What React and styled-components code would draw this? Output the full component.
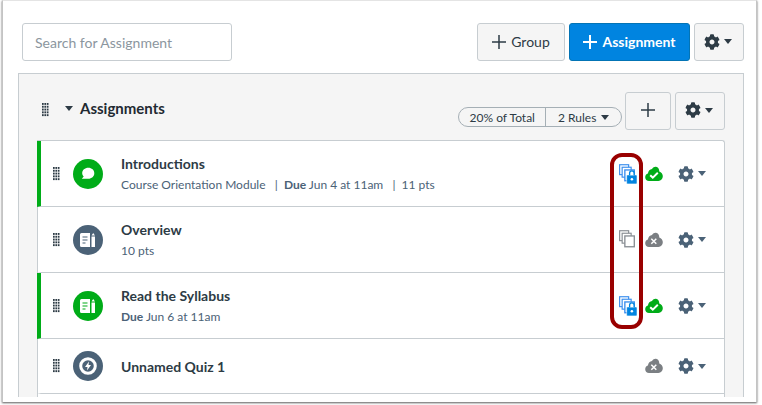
import styled, { createGlobalStyle } from "styled-components";
import { FaCog } from "react-icons/fa";

const GlobalStyle = createGlobalStyle`
  html, body { margin: 0; padding: 0; background: #ffffff; }
  body { font-family: "Lato", "Liberation Sans", sans-serif; color: #2d3b45; overflow: hidden; }
`;

const Screen = styled.div`
  position: relative;
  width: 762px;
  height: 405px;
  overflow: hidden;
  background: #fff;
`;

const Frame = styled.div`
  width: 755px;
  height: 402px;
  margin-left: 2px;
  box-sizing: border-box;
  background: #fff;
  border-top: 1px solid #e4e4e4;
  border-left: 1px solid #c4c4c4;
  border-right: 1px solid #c4c4c4;
  box-shadow: 0 1px 2px rgba(0, 0, 0, 0.65);
  padding: 22px 12px 0 15px;
  overflow: hidden;
`;

const Toolbar = styled.div`
  display: flex;
  align-items: flex-start;
  padding: 0 0 0 4px;
  height: 50px;
`;

const SearchBox = styled.div`
  width: 210px;
  height: 38px;
  box-sizing: border-box;
  border: 1px solid #c7cdd1;
  border-radius: 3px;
  padding: 0 12px;
  display: flex;
  align-items: center;
  font-size: 14px;
  color: #8b969e;
`;

const Actions = styled.div`
  margin-left: auto;
  display: flex;
  gap: 4px;
`;

const Button = styled.div`
  height: 38px;
  width: ${p => p.$w}px;
  flex: none;
  box-sizing: border-box;
  display: flex;
  align-items: center;
  justify-content: center;
  gap: ${p => p.$gap || 5}px;
  border-radius: 3px;
  border: 1px solid ${p => (p.$primary ? "#0374b5" : "#c7cdd1")};
  background: ${p => (p.$primary ? "#0084e0" : "#f5f5f5")};
  color: ${p => (p.$primary ? "#fff" : "#2d3b45")};
  font-size: 14px;
  font-weight: ${p => (p.$primary ? 700 : 400)};
  padding: 0 ${p => p.$pr || 0}px 1px 0;
`;

const Panel = styled.div`
  height: 324px;
  box-sizing: border-box;
  background: #f5f5f5;
  border-top: 1px solid #c7cdd1;
  border-left: 1px solid #c7cdd1;
  border-right: 1px solid #c7cdd1;
  padding: 0 18px;
  overflow: hidden;
`;

const GroupHeader = styled.div`
  height: 65px;
  box-sizing: border-box;
  display: flex;
  align-items: center;
  padding: 8px 0 0 5px;
`;

const GroupHandle = styled.div`
  display: flex;
  position: relative;
  top: -1px;
`;

const CollapseCaret = styled.div`
  margin-left: 16px;
  position: relative;
  top: -2px;
  color: #2d3b45;
`;

const GroupTitle = styled.div`
  font-size: 15px;
  font-weight: 700;
  margin-left: 7px;
  color: #1f2a32;
  position: relative;
  top: -3px;
`;

const HeaderRight = styled.div`
  margin-left: auto;
  display: flex;
  align-items: center;
  gap: 4px;
`;

const Pill = styled.div`
  width: 164px;
  height: 20px;
  box-sizing: border-box;
  display: flex;
  align-items: center;
  border: 1px solid #a5afb5;
  border-radius: 10px;
  font-size: 12px;
  color: #2d3b45;
  margin: 13px -1px 0 0;
`;

const PillPart = styled.div`
  height: 100%;
  display: flex;
  align-items: center;
  justify-content: center;
  gap: 5px;
  width: ${p => p.$w}px;
  border-left: ${p => (p.$divided ? "1px solid #a5afb5" : "none")};
`;

const List = styled.div`
  background: #fff;
  border-top: 1px solid #c7cdd1;
  border-left: 1px solid #c7cdd1;
  border-right: 1px solid #c7cdd1;
  border-top-right-radius: 3px;
  margin-top: 1px;
`;

const Row = styled.div`
  height: ${p => p.$h || 66}px;
  box-sizing: border-box;
  display: flex;
  align-items: center;
  border-bottom: 1px solid #c7cdd1;
  border-left: 4px solid ${p => (p.$published ? "#00ac18" : "transparent")};
  margin-left: -1px;
  padding-left: 12px;
`;

const IconCircle = styled.div`
  width: 30px;
  height: 30px;
  border-radius: 50%;
  flex: none;
  display: flex;
  align-items: center;
  justify-content: center;
  background: ${p => (p.$published ? "#00ac18" : "#4b6277")};
  color: ${p => (p.$published ? "#00ac18" : "#4b6277")};
  margin-left: 13px;
`;

const RowBody = styled.div`
  margin-left: 18px;
  display: flex;
  flex-direction: column;
  gap: 5px;
`;

const Title = styled.div`
  font-size: 14px;
  font-weight: 700;
  line-height: 17px;
  color: #2d3b45;
`;

const Meta = styled.div`
  font-size: 12px;
  line-height: 15px;
  color: #4b6277;
  white-space: pre;

  b { font-weight: 700; }
`;

const RowActions = styled.div`
  margin-left: auto;
  display: flex;
  align-items: center;
  padding-right: 18px;
`;

const CopySlot = styled.div`
  width: 20px;
  height: 20px;
  margin-right: 6px;
`;

const CloudSlot = styled.div`
  width: 18px;
  height: 16px;
  margin-right: 15px;
`;

const GearMenu = styled.div`
  display: flex;
  align-items: center;
  gap: 4px;
  color: #4b6277;
`;

const Caret = styled.span`
  display: block;
  width: 0;
  height: 0;
  border-left: 4px solid transparent;
  border-right: 4px solid transparent;
  border-top: 5px solid currentColor;
`;

const Highlight = styled.div`
  position: absolute;
  left: 610px;
  top: 153px;
  width: 33px;
  height: 176px;
  box-sizing: border-box;
  border: 4px solid #990000;
  border-radius: 12px;
`;

const Handle = () => (
  <svg width="7" height="14" viewBox="0 0 7 14" style={{ flex: "none" }}>
    {[0, 1, 2].flatMap(c =>
      [0, 1, 2, 3, 4].map(r => (
        <rect key={`${c}-${r}`} x={c * 2.4} y={r * 2.8} width="1.7" height="1.9" fill="#2d3b45" />
      ))
    )}
  </svg>
);

const Plus = ({ size = 14, weight = 1.5 }) => (
  <svg width={size} height={size} viewBox="0 0 14 14">
    <path d="M7 0v14M0 7h14" stroke="currentColor" strokeWidth={weight} fill="none" />
  </svg>
);

const DiscussionIcon = () => (
  <svg width="16" height="16" viewBox="0 0 16 16">
    <path d="M8.300 1.800c3.400 0 6 2.300 6 5.400s-2.600 5.500-6 5.500H1.800l1.900-2.300C2.700 9.400 2.200 8.400 2.200 7.200c0-3.100 2.700-5.400 6.100-5.400z" fill="#fff" />
  </svg>
);

const PageIcon = () => (
  <svg width="16" height="14" viewBox="0 0 16 14">
    <path d="M0 1.500A1.500 1.500 0 0 1 1.500 0H10v14H1.500A1.500 1.500 0 0 1 0 12.500z" fill="#fff" />
    <path d="M2.500 4h5M2.500 7h5M2.500 10h3" stroke="currentColor" strokeWidth="1.200" />
    <path d="M11.500 3.500h3.500V14h-3.500zM11.500 2.500 13.200 0 15 2.500z" fill="#fff" />
  </svg>
);

const QuizIcon = () => (
  <svg width="18" height="18" viewBox="0 0 18 18">
    <circle cx="9" cy="9" r="7.300" fill="none" stroke="#fff" strokeWidth="3" />
    <path d="M10 4.500 6 10h2.500L8 13.500 12 8H9.500z" fill="#fff" />
  </svg>
);

const CopyIcon = ({ color, locked }) => (
  <svg width="18" height="20" viewBox="0 0 20 22" style={{ display: "block" }}>
    <rect x=".7" y=".7" width="10" height="11" fill="#fff" stroke={color} strokeWidth="1.300" />
    <rect x="3.500" y="3.500" width="10" height="11" fill="#fff" stroke={color} strokeWidth="1.300" />
    <rect x="6.500" y="6.500" width="10.500" height="12" fill="#fff" stroke={color} strokeWidth="1.500" />
    {locked && (
      <>
        <rect x="8.500" y="12" width="11.500" height="10" rx="1" fill="#0084e0" stroke="#fff" strokeWidth=".6" />
        <path d="M11.800 12.500V10a2.500 2.500 0 0 1 5 0v2.500" fill="#fff" stroke="#0084e0" strokeWidth="1.500" />
        <circle cx="14.300" cy="16.800" r="1.400" fill="#fff" />
      </>
    )}
  </svg>
);

const CloudIcon = ({ published }) => (
  <svg width="18" height="16" viewBox="0 0 18 16" style={{ display: "block" }}>
    <path
      d="M4 15C1.800 15 .2 13.400.2 11.200c0-1.800 1.100-3.200 2.700-3.700C3.300 4.800 5 3.300 7 3c1.100-1.600 2.600-2.500 4-2.200 2.100.4 3.300 2.200 3.300 4.600 2 .7 3.500 2.500 3.500 4.700 0 2.700-1.900 4.900-4.400 4.900z"
      fill={published ? "#00ac18" : "#7b7f83"}
    />
    {published ? (
      <path d="M5.200 9.200 7.800 11.600 12.800 6.800" fill="none" stroke="#fff" strokeWidth="2" />
    ) : (
      <path d="M6.300 6.800l5 5M11.300 6.800l-5 5" fill="none" stroke="#fff" strokeWidth="1.500" />
    )}
  </svg>
);

const rows = [
  {
    title: "Introductions",
    published: true,
    icon: "discussion",
    copy: "locked",
    meta: (
      <Meta>
        Course Orientation Module{"   |  "}<b>Due</b> Jun 4 at 11am{"   |  "}11 pts
      </Meta>
    ),
  },
  { title: "Overview", icon: "page", copy: "plain", meta: <Meta>10 pts</Meta> },
  {
    title: "Read the Syllabus",
    published: true,
    icon: "page",
    copy: "locked",
    meta: (
      <Meta>
        <b>Due</b> Jun 6 at 11am
      </Meta>
    ),
  },
  { title: "Unnamed Quiz 1", icon: "quiz", h: 55 },
];

const iconFor = kind => {
  if (kind === "discussion") return <DiscussionIcon />;
  if (kind === "quiz") return <QuizIcon />;
  return <PageIcon />;
};

const App = () => (
  <>
    <GlobalStyle />
    <Screen>
      <Frame>
        <Toolbar>
          <SearchBox>Search for Assignment</SearchBox>
          <Actions>
            <Button $w={88}>
              <Plus />
              Group
            </Button>
            <Button $w={121} $primary>
              <Plus weight={2} />
              Assignment
            </Button>
            <Button $w={50} $gap={4} $pr={2}>
              <FaCog size={16} />
              <Caret />
            </Button>
          </Actions>
        </Toolbar>
        <Panel>
          <GroupHeader>
            <GroupHandle>
              <Handle />
            </GroupHandle>
            <CollapseCaret>
              <Caret />
            </CollapseCaret>
            <GroupTitle>Assignments</GroupTitle>
            <HeaderRight>
              <Pill>
                <PillPart $w={87}>20% of Total</PillPart>
                <PillPart $w={75} $divided>
                  2 Rules
                  <Caret />
                </PillPart>
              </Pill>
              <Button $w={46}>
                <Plus />
              </Button>
              <Button $w={50} $gap={4} $pr={2}>
                <FaCog size={16} />
                <Caret />
              </Button>
            </HeaderRight>
          </GroupHeader>
          <List>
            {rows.map(r => (
              <Row key={r.title} $published={r.published} $h={r.h}>
                <Handle />
                <IconCircle $published={r.published}>{iconFor(r.icon)}</IconCircle>
                <RowBody>
                  <Title>{r.title}</Title>
                  {r.meta}
                </RowBody>
                <RowActions>
                  <CopySlot>
                    {r.copy === "locked" && <CopyIcon color="#3b8fee" locked />}
                    {r.copy === "plain" && <CopyIcon color="#8a8f94" />}
                  </CopySlot>
                  <CloudSlot>
                    <CloudIcon published={r.published} />
                  </CloudSlot>
                  <GearMenu>
                    <FaCog size={16} />
                    <Caret />
                  </GearMenu>
                </RowActions>
              </Row>
            ))}
            <Row $h={20} />
          </List>
        </Panel>
      </Frame>
      <Highlight />
    </Screen>
  </>
);

export default App;
